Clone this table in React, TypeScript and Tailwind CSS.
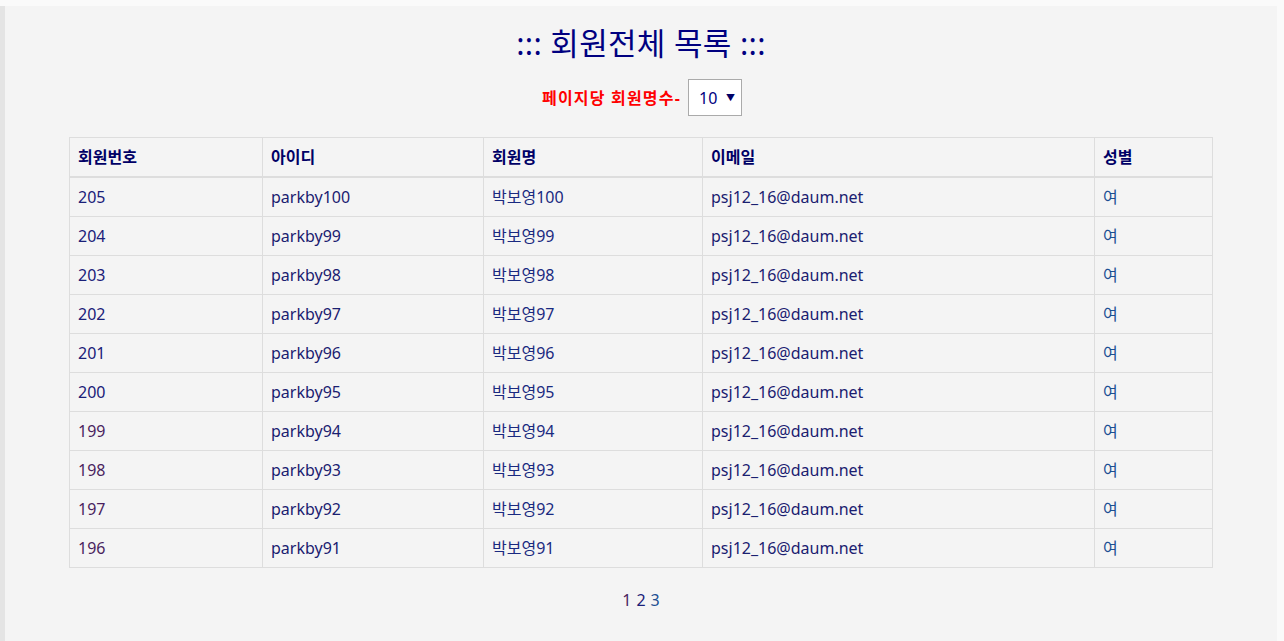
import React from 'react';

type Member = {
  no: number;
  id: string;
  name: string;
  email: string;
  gender: string;
};

const members: Member[] = Array.from({ length: 10 }, (_, i) => ({
  no: 205 - i,
  id: `parkby${100 - i}`,
  name: `박보영${100 - i}`,
  email: 'psj12_16@daum.net',
  gender: '여',
}));

const font = { fontFamily: '"Noto Sans", "Noto Sans CJK KR", sans-serif' };

const App = () => {
  return (
    <div className="min-h-screen bg-[#fafafa] pt-[6px]" style={font}>
      <div className="flex min-h-[635px] w-[1277px]">
        <div className="w-[5px] shrink-0 bg-[#e4e4e4]" />
        <div className="flex-1 bg-[#f4f4f4] pt-[17px] pb-10">
          <h1 className="text-center text-[31px] leading-[40px] tracking-[0.3px] text-[#000080]">::: 회원전체 목록 :::</h1>

          <div className="mt-4 flex items-center justify-center gap-[7px] pl-[2px]">
            <span className="text-[16px] font-bold tracking-[1.2px] text-[#ff0000]">페이지당 회원명수-</span>
            <div className="flex h-[37px] w-[54px] items-center justify-between border border-[#aaaaaa] bg-white pl-[10px] pr-[6px]">
              <span className="text-[16px] text-[#000080]">10</span>
              <span className="text-[9px] text-[#000066]">▼</span>
            </div>
          </div>

          <table className="mx-auto mt-[21px] w-[1144px] border-collapse text-[16px] leading-[22px]">
            <thead>
              <tr className="text-left font-bold text-[#000066]">
                <th className="w-[193px] border border-b-2 border-[#dddddd] px-[8px] py-[8px]">회원번호</th>
                <th className="w-[221px] border border-b-2 border-[#dddddd] px-[8px] py-[8px]">아이디</th>
                <th className="w-[219px] border border-b-2 border-[#dddddd] px-[8px] py-[8px]">회원명</th>
                <th className="w-[392px] border border-b-2 border-[#dddddd] px-[8px] py-[8px]">이메일</th>
                <th className="w-[118px] border border-b-2 border-[#dddddd] px-[8px] py-[8px]">성별</th>
              </tr>
            </thead>
            <tbody>
              {members.map((m) => (
                <tr key={m.no}>
                  <td className={`border border-[#dddddd] px-[8px] py-[8px] ${m.no < 200 ? 'text-[#4a1f5e]' : 'text-[#1a2078]'}`}>
                    {m.no}
                  </td>
                  <td className="border border-[#dddddd] px-[8px] py-[8px] text-[#1a2070]">{m.id}</td>
                  <td className="border border-[#dddddd] px-[8px] py-[8px] text-[#1a2a80]">{m.name}</td>
                  <td className="border border-[#dddddd] px-[8px] py-[8px] text-[#1a2070]">{m.email}</td>
                  <td className="border border-[#dddddd] px-[8px] py-[8px] text-[#1c4f92]">{m.gender}</td>
                </tr>
              ))}
            </tbody>
          </table>

          <div className="mt-[21px] flex justify-center gap-[5px] text-[16px] leading-[22px]">
            <span className="text-[#4a1f5e]">1</span>
            <span className="text-[#1a2078]">2</span>
            <span className="text-[#1c4f92]">3</span>
          </div>
        </div>
      </div>
    </div>
  );
};

export default App;
